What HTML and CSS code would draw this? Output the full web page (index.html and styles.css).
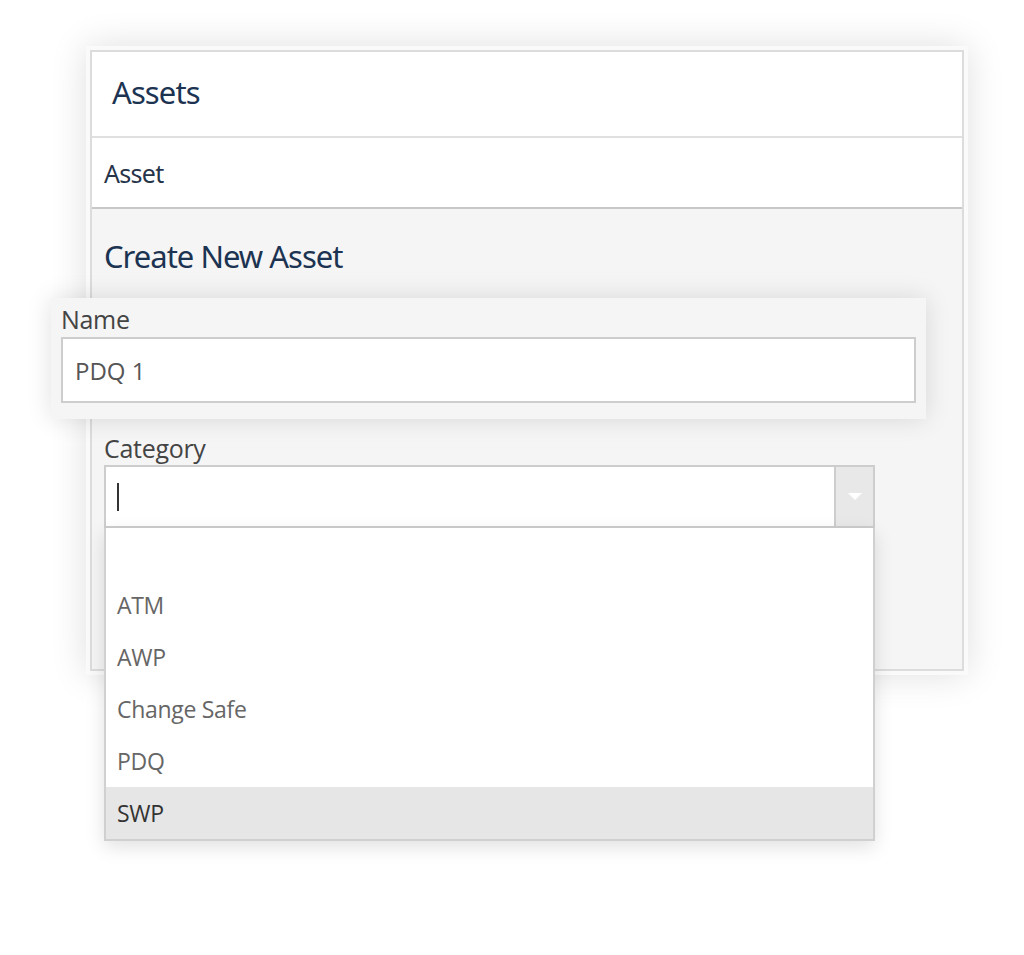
FILE: index.html
```html
<!DOCTYPE html>
<html lang="en">
<head>
    <meta charset="UTF-8">
    <meta name="viewport" content="width=device-width, initial-scale=1.0">
    <title>Assets</title>
    <link rel="stylesheet" href="styles.css">
</head>
<body>

    <div class="panel-frame">
        <div class="panel">
            <div class="panel-header">
                <h1 class="panel-title">Assets</h1>
            </div>
            <div class="panel-tab">Asset</div>

            <div class="panel-body">
                <h2 class="form-title">Create New Asset</h2>

                <div class="field field-focus">
                    <label class="field-label" for="assetName">Name</label>
                    <input type="text" id="assetName" class="text-input" value="PDQ 1">
                </div>

                <div class="field field-category">
                    <label class="field-label">Category</label>
                    <div class="combo">
                        <div class="combo-input"><span class="caret"></span></div>
                        <div class="combo-button">
                            <svg width="14" height="8" viewBox="0 0 14 8"><path d="M0 0 L14 0 L7 7 Z" fill="#fff"/></svg>
                        </div>
                    </div>
                    <ul class="combo-list">
                        <li class="combo-item combo-empty"></li>
                        <li class="combo-item">ATM</li>
                        <li class="combo-item">AWP</li>
                        <li class="combo-item">Change Safe</li>
                        <li class="combo-item">PDQ</li>
                        <li class="combo-item selected">SWP</li>
                    </ul>
                </div>
            </div>
        </div>
    </div>

</body>
</html>
```

FILE: styles.css
```css
html, body {
    margin: 0;
    min-height: 100vh;
    background-color: #fff;
}
body {
    font-family: "Open Sans", "Noto Sans", sans-serif;
    overflow: hidden;
}
.panel-frame {
    margin: 46px 0 0 86px;
    width: 874px;
    padding: 4px;
    background-color: #fafafa;
    box-shadow: 0 0 34px rgba(0, 0, 0, 0.13);
}
.panel {
    border: 2px solid #dcdcdc;
}
.panel-header {
    height: 84px;
    background-color: #fff;
    border-bottom: 2px solid #e0e0e0;
    display: flex;
    align-items: center;
    padding-left: 20px;
}
.panel-title {
    margin: 0 0 4px 0;
    font-family: "Noto Sans", sans-serif;
    font-weight: normal;
    font-size: 31px;
    letter-spacing: -0.9px;
    color: #1c3352;
}
.panel-tab {
    height: 69px;
    background-color: #fff;
    border-bottom: 2px solid #c8c8c8;
    display: flex;
    align-items: center;
    padding-left: 12px;
    font-family: "Noto Sans", sans-serif;
    font-size: 25px;
    letter-spacing: -0.7px;
    color: #26344a;
}
.panel-body {
    background-color: #f5f5f5;
    height: 460px;
    padding: 0 12px;
}
.form-title {
    margin: 0;
    padding-top: 26px;
    height: 63px;
    font-family: "Noto Sans", sans-serif;
    font-weight: normal;
    font-size: 31px;
    line-height: 42px;
    letter-spacing: -1px;
    color: #1c3352;
}
.field-focus {
    margin: 0 0 0 -53px;
    width: 855px;
    padding: 3px 10px 16px 10px;
    background-color: #f5f5f5;
    box-shadow: 0 0 24px rgba(0, 0, 0, 0.12);
}
.field-label {
    display: block;
    font-size: 25px;
    line-height: 36px;
    letter-spacing: -0.3px;
    color: #444;
}
.text-input {
    display: block;
    box-sizing: border-box;
    width: 100%;
    height: 66px;
    padding: 0 12px;
    border: 2px solid #cdcdcd;
    background-color: #fff;
    font-family: "Open Sans", sans-serif;
    font-size: 24px;
    color: #555;
    outline: none;
}
.field-category {
    position: relative;
    width: 771px;
    margin-top: 12px;
}
.field-category .field-label {
    line-height: 34px;
}
.combo {
    display: flex;
    height: 63px;
    box-sizing: border-box;
    border: 2px solid #cdcdcd;
    background-color: #fff;
}
.combo-input {
    flex: 1;
    display: flex;
    align-items: center;
    padding-left: 11px;
}
.caret {
    width: 2px;
    height: 28px;
    background-color: #333;
}
.combo-button {
    width: 37px;
    background-color: #e8e8e8;
    border-left: 2px solid #cdcdcd;
    display: flex;
    align-items: center;
    justify-content: center;
}
.combo-list {
    position: absolute;
    top: 97px;
    left: 0;
    width: 771px;
    box-sizing: border-box;
    margin: 0;
    padding: 0;
    list-style: none;
    background-color: #fff;
    border: 2px solid #d0d0d0;
    border-top: none;
    box-shadow: 0 6px 18px rgba(0, 0, 0, 0.12);
}
.combo-item {
    height: 52px;
    line-height: 52px;
    padding-left: 11px;
    font-size: 23px;
    letter-spacing: -0.3px;
    color: #666;
}
.combo-empty {
    height: 51px;
}
.combo-item.selected {
    background-color: #e6e6e6;
    color: #333;
}
```
